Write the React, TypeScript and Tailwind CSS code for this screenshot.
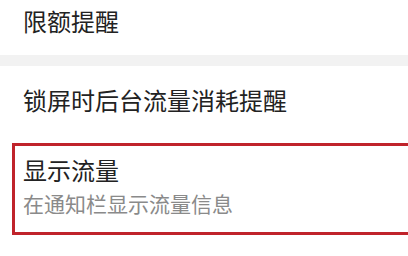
export default function App() {
  return (
    <div className="w-[408px] h-[256px] overflow-hidden bg-white font-['Noto_Sans_CJK_SC',sans-serif] text-[#222]">
      <div className="h-[55px] pl-[23px] pt-[9px] text-[24px] leading-[24px]">限额提醒</div>
      <div className="h-[11px] bg-[#f2f2f2]" />
      <div className="h-[77px] pl-[23px] pt-[22px] text-[24px] leading-[24px]">锁屏时后台流量消耗提醒</div>
      <div className="ml-[12px] w-[420px] h-[92px] border-[3px] border-[#c0232b] pl-[8px] pt-[12px]">
        <div className="text-[24px] leading-[24px]">显示流量</div>
        <div className="mt-[11px] text-[21px] leading-[21px] text-[#8a8a8a]">在通知栏显示流量信息</div>
      </div>
    </div>
  );
}
